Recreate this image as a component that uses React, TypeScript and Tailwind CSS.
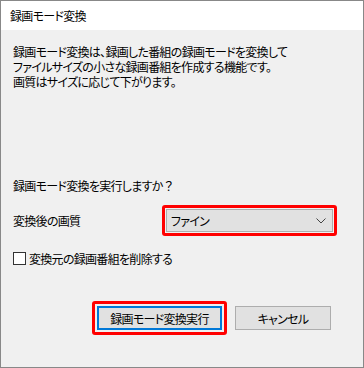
import React from 'react';

// ウィンドウ本体のフォント（Yu Gothic UI に近づけるため palt と字間詰めを使用）
const font = "font-['Noto_Sans_CJK_JP',sans-serif] [font-feature-settings:'palt'] text-[12px] tracking-[-0.7px] text-black";

const App: React.FC = () => {
  return (
    <div className={`w-[364px] h-[368px] border border-[#888888] flex flex-col ${font}`}>
      {/* Title bar */}
      <div className="h-[29px] bg-white flex items-center pl-[9px] leading-[15px]">
        録画モード変換
      </div>

      {/* Body */}
      <div className="flex-1 bg-[#f0f0f0] px-[12px] pt-[14px] flex flex-col">
        <p className="leading-[15px]">
          録画モード変換は、録画した番組の録画モードを変換して
          <br />
          ファイルサイズの小さな録画番組を作成する機能です。
          <br />
          画質はサイズに応じて下がります。
        </p>

        <p className="mt-[89px] leading-[15px]">
          録画モード変換を実行しますか<span className="[font-feature-settings:normal]">？</span>
        </p>

        <div className="mt-[12px] flex items-center">
          <span className="w-[149px] leading-[15px]">変換後の画質</span>
          <div className="w-[175px] border-[3px] border-[#ff0000] rounded-[3px] p-px">
            <div className="h-[23px] border border-[#adadad] bg-[#e1e1e1] flex items-center justify-between pl-[4px] pr-[6px]">
              <span className="leading-[15px]">ファイン</span>
              <svg width="10" height="6" viewBox="0 0 10 6" fill="none">
                <path d="M0.5 0.5 L5 5 L9.5 0.5" stroke="#444" strokeWidth="1" />
              </svg>
            </div>
          </div>
        </div>

        <label className="mt-[15px] flex items-center gap-[3px] leading-[15px]">
          <span className="w-[13px] h-[13px] border border-[#333333] bg-white shrink-0" />
          変換元の録画番組を削除する
        </label>

        <div className="mt-[35px] mr-[20px] flex justify-end items-center gap-[8px]">
          <div className="border-[3px] border-[#ff0000] rounded-[3px] p-[2px]">
            <button className="w-[125px] h-[24px] border-2 border-[#0078d7] bg-[#e1e1e1] flex items-center justify-center leading-[15px]">
              録画モード変換実行
            </button>
          </div>
          <button className="w-[96px] h-[24px] border border-[#adadad] bg-[#e1e1e1] flex items-center justify-center leading-[15px]">
            キャンセル
          </button>
        </div>
      </div>
    </div>
  );
};

export default App;
